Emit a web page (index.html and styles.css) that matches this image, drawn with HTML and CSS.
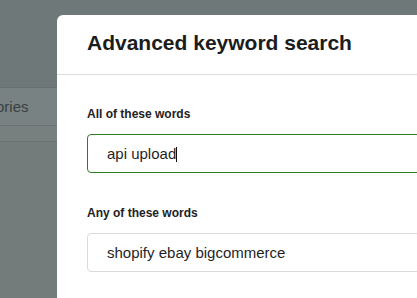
FILE: index.html
```html
<!DOCTYPE html>
<html lang="en">
<head>
    <meta charset="UTF-8">
    <meta name="viewport" content="width=device-width, initial-scale=1.0">
    <title>Advanced keyword search</title>
    <link rel="stylesheet" href="styles.css">
</head>
<body>
    <div class="page">
        <div class="topbar"></div>
        <div class="nav-row nav-active">Categories</div>
        <div class="nav-row nav-small"></div>
    </div>
    <div class="modal">
        <div class="modal-header">
            <h1>Advanced keyword search</h1>
        </div>
        <div class="modal-body">
            <label class="field-label">All of these words</label>
            <div class="field field-focus">api upload<span class="caret"></span></div>
            <label class="field-label">Any of these words</label>
            <div class="field">shopify ebay bigcommerce</div>
        </div>
    </div>
</body>
</html>
```

FILE: styles.css
```css
body {
    margin: 0;
    height: 100vh;
    overflow: hidden;
    font-family: "Liberation Sans", Arial, sans-serif;
    background: #737b7b;
    position: relative;
}
.page {
    width: 100%;
}
.topbar {
    height: 87px;
    background: #6f7878;
    border-bottom: 1px solid #687070;
}
.nav-row {
    background: #798282;
    border-bottom: 1px solid #6a7272;
}
.nav-active {
    height: 37px;
    line-height: 37px;
    font-size: 15px;
    color: #394141;
    margin-left: -44px;
    padding-left: 0;
}
.nav-small {
    height: 15px;
    background: #777f7f;
}
.modal {
    position: absolute;
    top: 15px;
    left: 57px;
    width: 460px;
    height: 320px;
    background: #fff;
    border-radius: 6px;
}
.modal-header {
    padding: 14px 30px 17px;
    border-bottom: 1px solid #dcdcdc;
}
h1 {
    margin: 0;
    font-size: 21px;
    line-height: 28px;
    font-weight: 600;
    color: #1c1c1c;
}
.modal-body {
    padding: 31px 0 0 30px;
}
.field-label {
    display: block;
    font-size: 12px;
    line-height: 16px;
    font-weight: 600;
    color: #222;
    margin-bottom: 12px;
}
.field {
    height: 37px;
    line-height: 37px;
    border: 1px solid #dadada;
    border-radius: 4px;
    padding-left: 19px;
    font-size: 15px;
    color: #1f1f1f;
    margin-bottom: 32px;
}
.field-focus {
    border-color: #2e7d1f;
}
.caret {
    display: inline-block;
    width: 1px;
    height: 15px;
    background: #111;
    vertical-align: -3px;
}
```
